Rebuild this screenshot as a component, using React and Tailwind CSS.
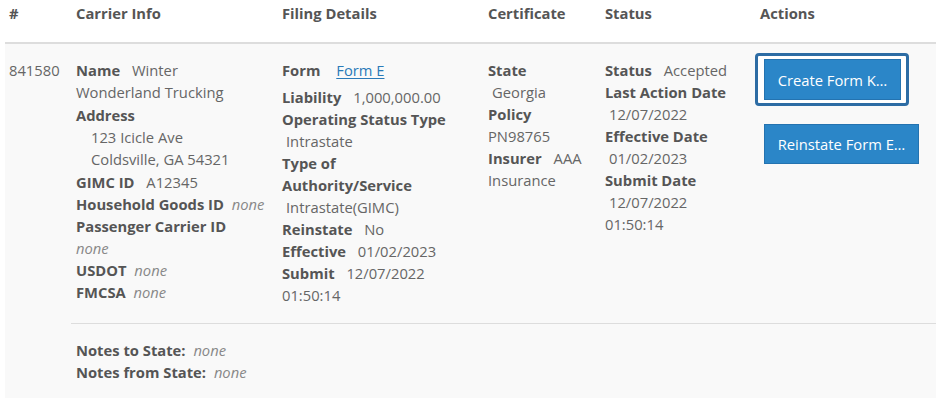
import React from "react";

const L = ({ children }) => (
  <span className="font-bold text-[#555] mr-1">{children}</span>
);
const V = ({ children }) => <span className="ml-1 text-[#666]">{children}</span>;
const N = () => <i className="text-[#888]">none</i>;

export default function App() {
  return (
    <div
      className="bg-white w-[943px] h-[412px] text-[14.75px] leading-[22px] text-[#666] pl-[5px] pr-[7px]"
      style={{ fontFamily: '"Open Sans", "Noto Sans", sans-serif' }}
    >
      {/* Header */}
      <div className="grid grid-cols-[66px_206px_206px_117px_155px_1fr] border-b-2 border-[#ddd] font-bold text-[#555]">
        <div className="pl-[4px] pt-[2px] pb-[18px]">#</div>
        <div className="pl-[5px] pt-[2px] pb-[18px]">Carrier Info</div>
        <div className="pl-[5px] pt-[2px] pb-[18px]">Filing Details</div>
        <div className="pl-[5px] pt-[2px] pb-[18px]">Certificate</div>
        <div className="pl-[5px] pt-[2px] pb-[18px]">Status</div>
        <div className="pl-[5px] pt-[2px] pb-[18px]">Actions</div>
      </div>

      {/* Row */}
      <div className="bg-[#f9f9f9]">
        <div className="grid grid-cols-[66px_206px_206px_117px_155px_1fr]">
          <div className="pl-[4px] pt-[15px] pb-[17px]">841580</div>

          <div className="pl-[5px] pr-[9px] pt-[15px] pb-[17px]">
            <div>
              <L>Name</L>{" "}
              <V>
                Winter
                <br />
                Wonderland Trucking
              </V>
            </div>
            <div className="my-[1px]">
              <div className="font-bold text-[#555]">Address</div>
              <div className="pl-[15px]">123 Icicle Ave</div>
              <div className="pl-[15px]">Coldsville, GA 54321</div>
            </div>
            <div>
              <L>GIMC ID</L> <V>A12345</V>
            </div>
            <div className="whitespace-nowrap">
              <L>Household Goods ID</L> <N />
            </div>
            <div>
              <L>Passenger Carrier ID</L>
              <br />
              <N />
            </div>
            <div>
              <L>USDOT</L> <N />
            </div>
            <div>
              <L>FMCSA</L> <N />
            </div>
          </div>

          <div className="pl-[5px] pr-[23px] pt-[15px] pb-[17px]">
            <div>
              <L>Form</L>{" "}
              <a
                href="#"
                className="inline-block ml-1 pl-1 pb-[5px] text-[#2a7ab8] underline underline-offset-2"
              >
                Form E
              </a>
            </div>
            <div>
              <L>Liability</L> <V>1,000,000.00</V>
            </div>
            <div>
              <L>Operating Status Type</L> <V>Intrastate</V>
            </div>
            <div>
              <L>Type of Authority/Service</L> <V>Intrastate(GIMC)</V>
            </div>
            <div>
              <L>Reinstate</L> <V>No</V>
            </div>
            <div>
              <L>Effective</L> <V>01/02/2023</V>
            </div>
            <div>
              <L>Submit</L> <V>12/07/2022 01:50:14</V>
            </div>
          </div>

          <div className="pl-[5px] pr-[12px] pt-[15px] pb-[17px]">
            <div>
              <L>State</L> <V>Georgia</V>
            </div>
            <div>
              <L>Policy</L> <span className="text-[#666]">PN98765</span>
            </div>
            <div>
              <L>Insurer</L> <V>AAA Insurance</V>
            </div>
          </div>

          <div className="pl-[5px] pr-[18px] pt-[15px] pb-[17px]">
            <div>
              <L>Status</L> <V>Accepted</V>
            </div>
            <div>
              <L>Last Action Date</L> <V>12/07/2022</V>
            </div>
            <div>
              <L>Effective Date</L> <V>01/02/2023</V>
            </div>
            <div>
              <L>Submit Date</L> <V>12/07/2022 01:50:14</V>
            </div>
          </div>

          <div className="pt-[9px] flex flex-col items-start">
            <div className="border-[3px] border-[#2d6ca4] rounded-[4px] bg-white pl-[6px] pr-[5px] py-[3px]">
              <button className="w-[137px] h-[41px] bg-[#2b86c8] border border-[#2473b0] text-white text-[14.75px] whitespace-nowrap">
                Create Form K…
              </button>
            </div>
            <button className="mt-[18px] ml-[9px] w-[155px] h-[40px] bg-[#2b86c8] border border-[#2473b0] text-white text-[14.75px] whitespace-nowrap">
              Reinstate Form E…
            </button>
          </div>
        </div>

        {/* Notes */}
        <div className="flex">
          <div className="w-[66px] shrink-0" />
          <div className="flex-1 border-t border-[#ddd] px-[5px] pt-[15px] pb-[15px]">
            <div>
              <L>Notes to State:</L> <N />
            </div>
            <div>
              <L>Notes from State:</L> <N />
            </div>
          </div>
        </div>
      </div>
    </div>
  );
}
